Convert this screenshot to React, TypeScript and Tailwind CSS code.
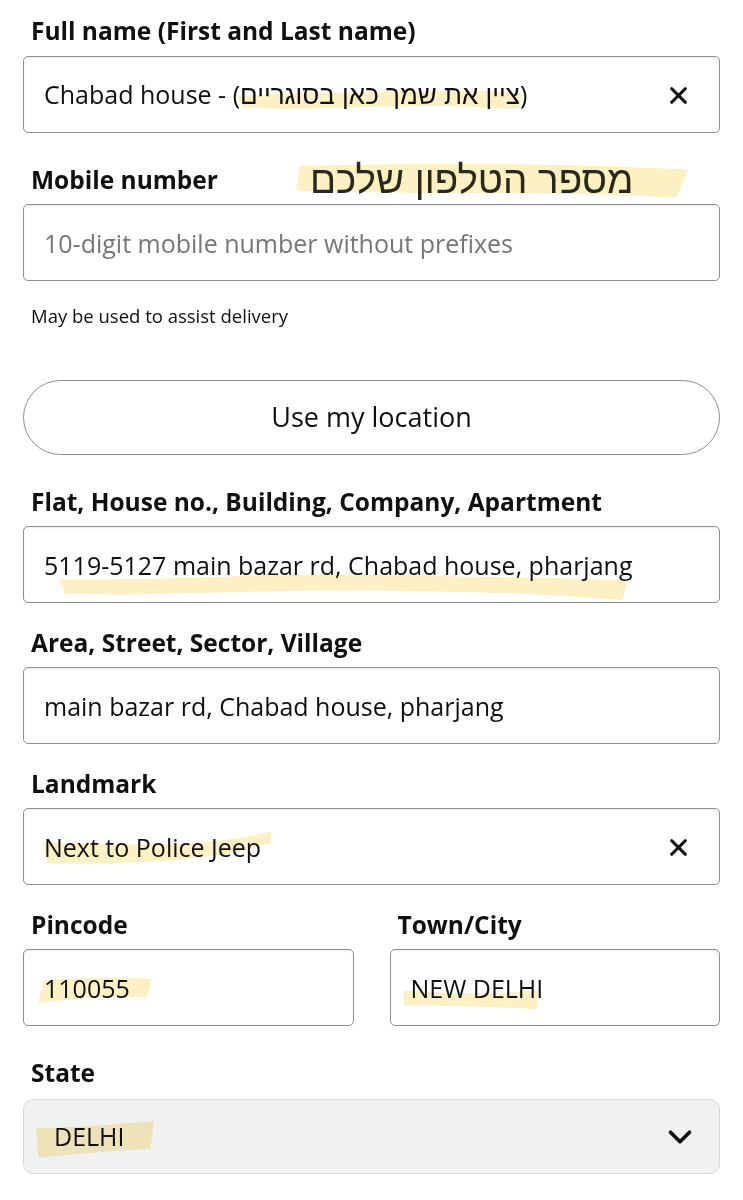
import { X, ChevronDown } from 'lucide-react';
import type { ReactNode } from 'react';

const FONT = { fontFamily: '"Open Sans", "Liberation Sans", "DejaVu Sans", sans-serif' };
const HEB = { fontFamily: '"Liberation Sans", "DejaVu Sans", sans-serif' };

type MarkProps = { left: number; top: number; width: number; height: number; d: string };

// yellow marker strokes drawn over the screenshot
function Mark({ left, top, width, height, d }: MarkProps) {
  return (
    <svg
      className="pointer-events-none absolute mix-blend-multiply"
      style={{ left, top, width, height }}
      viewBox="0 0 100 100"
      preserveAspectRatio="none"
    >
      <path d={d} fill="#fdf0c2" />
    </svg>
  );
}

function Label({ children, className = '' }: { children: ReactNode; className?: string }) {
  return (
    <div className={`flex h-8 items-center pl-2 text-[24.5px] font-bold text-[#0f1111] ${className}`}>
      {children}
    </div>
  );
}

function Field({
  value,
  placeholder,
  clear,
}: {
  value?: string;
  placeholder?: string;
  clear?: boolean;
}) {
  return (
    <div className="mt-2 flex h-[77px] items-center rounded-[5px] border border-[#8d9191] bg-white pl-5 pr-[27px] pt-[2px] shadow-[inset_0_1px_2px_rgba(15,17,17,0.08)]">
      <span className={`flex-1 truncate text-[25px] ${value ? 'text-[#0f1111]' : 'text-[#737777]'}`}>
        {value ?? placeholder}
      </span>
      {clear && <X size={27} strokeWidth={2.8} className="text-[#0f1111]" />}
    </div>
  );
}

export default function App() {
  return (
    <div className="relative min-h-[1200px] bg-white px-[23px] pt-[15px]" style={FONT}>
      <Label>Full name (First and Last name)</Label>
      <div className="mt-[9px] flex h-[77px] items-center rounded-[5px] border border-[#8d9191] bg-white pl-5 pr-[27px] pt-[2px] shadow-[inset_0_1px_2px_rgba(15,17,17,0.08)]">
        <span className="flex-1 text-[25px] text-[#0f1111]">
          Chabad house - (
          <span dir="rtl" className="text-[26px]" style={HEB}>
            ציין את שמך כאן בסוגריים
          </span>
          )
        </span>
        <X size={27} strokeWidth={2.8} className="text-[#0f1111]" />
      </div>

      <Label className="mt-[31px]">
        <span className="w-[279px]">Mobile number</span>
        <span dir="rtl" className="text-[38.5px] font-normal leading-none text-[#2a2a22]" style={HEB}>
          מספר הטלפון שלכם
        </span>
      </Label>
      <Field placeholder="10-digit mobile number without prefixes" />
      <div className="mt-[23px] flex h-6 items-center pl-2 text-[18.5px] text-[#0f1111]">
        May be used to assist delivery
      </div>

      <button
        type="button"
        className="mt-[52px] flex h-[75px] w-full items-center justify-center rounded-full border border-[#8d9191] bg-white text-[27px] text-[#0f1111]"
      >
        Use my location
      </button>

      <Label className="mt-[31px]">Flat, House no., Building, Company, Apartment</Label>
      <Field value="5119-5127 main bazar rd, Chabad house, pharjang" />

      <Label className="mt-6">Area, Street, Sector, Village</Label>
      <Field value="main bazar rd, Chabad house, pharjang" />

      <Label className="mt-6">Landmark</Label>
      <Field value="Next to Police Jeep" clear />

      <div className="mt-6 grid grid-cols-2 gap-9">
        <div>
          <Label>Pincode</Label>
          <Field value="110055" />
        </div>
        <div>
          <Label>Town/City</Label>
          <Field value="NEW DELHI" />
        </div>
      </div>

      <Label className="mt-[31px]">State</Label>
      <div className="mt-[10px] flex h-[75px] items-center rounded-[10px] border border-[#d5d9d9] bg-[#f0f2f2] pl-[30px] pr-[20px]">
        <span className="flex-1 text-[25px] text-[#0f1111]">DELHI</span>
        <ChevronDown size={38} strokeWidth={2.3} className="text-[#0f1111]" />
      </div>

      <Mark left={237} top={86} width={285} height={25} d="M0,40 C25,20 50,30 75,20 C88,15 95,25 100,30 L99,90 C92,95 85,80 70,80 C45,80 20,100 2,85 Z" />
      <Mark left={296} top={160} width={392} height={38} d="M1,15 C30,10 60,5 100,25 L97,100 C70,82 40,92 0,80 Z" />
      <Mark left={59} top={568} width={569} height={32} d="M0,35 C20,40 35,15 55,22 C75,28 90,30 100,40 L99,100 C85,80 70,70 50,70 C30,70 15,90 1,80 Z" />
      <Mark left={43} top={830} width={228} height={35} d="M0,35 C40,45 70,50 100,5 L100,35 C80,85 40,100 2,95 Z" />
      <Mark left={38} top={975} width={114} height={28} d="M5,20 C35,10 70,5 100,15 L95,80 C65,70 35,85 0,100 Z" />
      <Mark left={403} top={986} width={135} height={23} d="M0,20 C35,35 70,35 100,20 L99,100 C65,90 30,85 1,85 Z" />
      <Mark left={36} top={1121} width={118} height={37} d="M0,20 C35,18 70,8 100,0 L97,75 C65,80 30,90 2,100 Z" />
    </div>
  );
}
